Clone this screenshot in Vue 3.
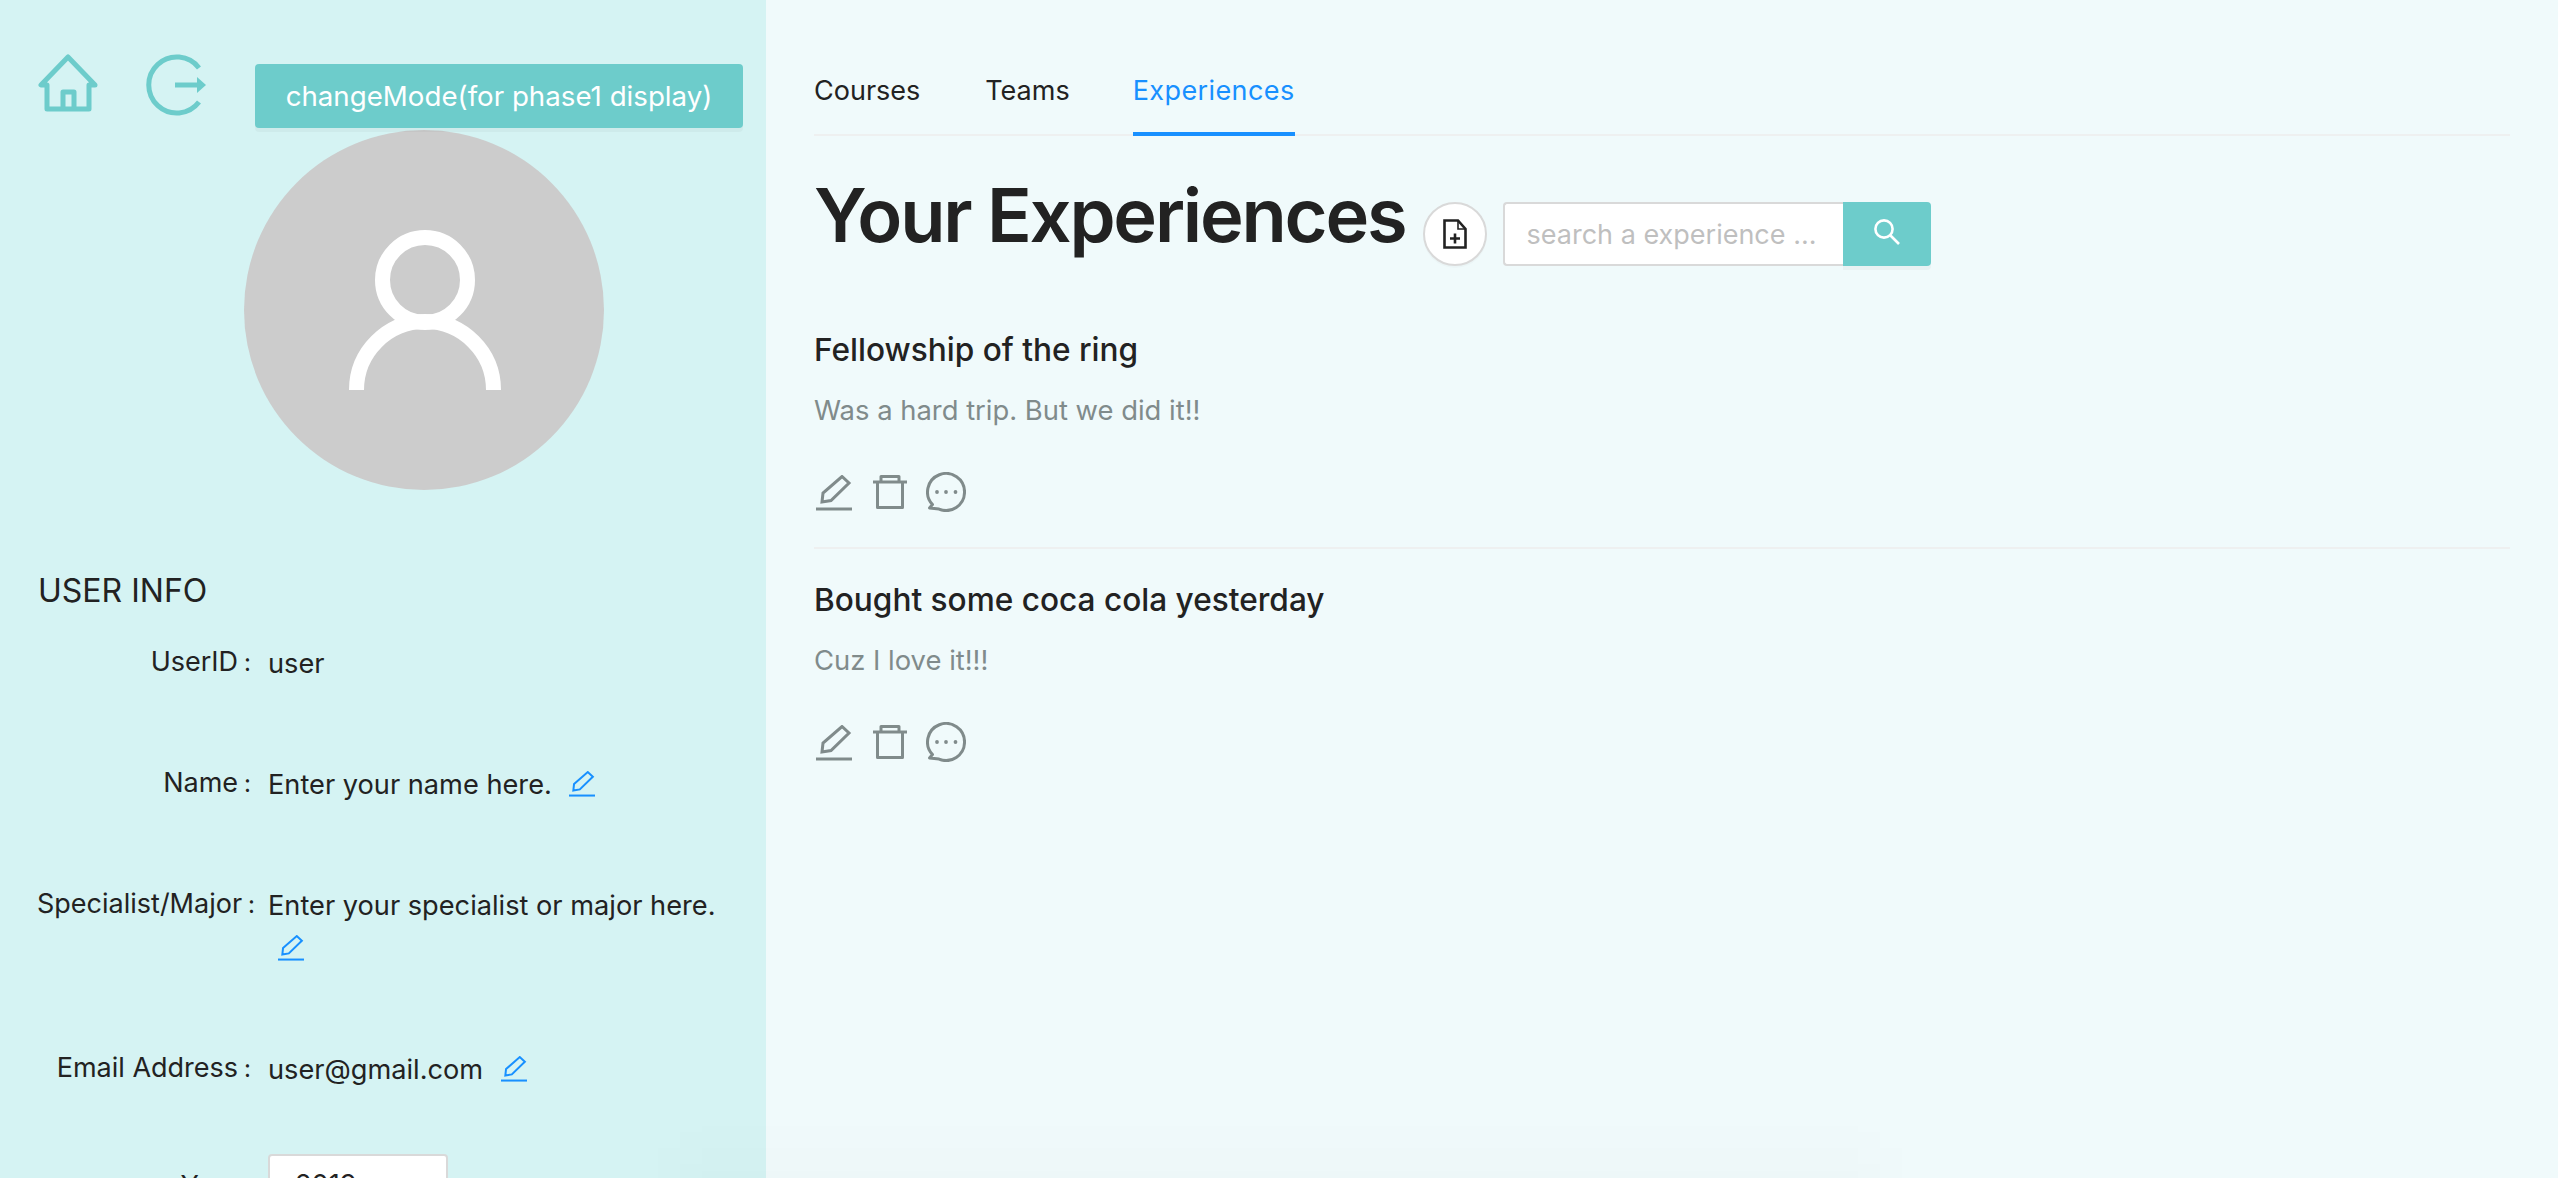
<script setup>
import { ref } from "vue";

const tabs = ["Courses", "Teams", "Experiences"];
const activeTab = ref("Experiences");
const search = ref("");

const experiences = ref([
  { id: 1, title: "Fellowship of the ring", desc: "Was a hard trip. But we did it!!" },
  { id: 2, title: "Bought some coca cola yesterday", desc: "Cuz I love it!!!" },
]);

const pencil = "M6 27 L7 18 L26 1.5 L33 8 L15 25.5 Z";
</script>

<template>
  <div class="page">
    <aside class="sidebar">
      <div class="top-row">
        <svg class="home-icon" viewBox="0 0 62 60" fill="none" stroke="#6dcccb" stroke-width="5" stroke-linejoin="round">
          <path d="M52 31 H58 L31 3 L4 31 H10 V55 H52 Z" />
          <path d="M26 55 V38 H37 V55" />
        </svg>
        <svg class="logout-icon" viewBox="0 0 66 62" fill="none" stroke="#6dcccb" stroke-width="5">
          <path d="M53 14 A28 28 0 1 0 53 48" />
          <path d="M29 31 H52" />
          <path d="M51 23 L60 31 L51 39 Z" fill="#6dcccb" stroke="none" />
        </svg>
        <button class="mode-btn">changeMode(for phase1 display)</button>
      </div>

      <div class="avatar">
        <svg viewBox="0 0 360 360" fill="none" stroke="#fff" stroke-width="15">
          <circle cx="181" cy="150" r="42.5" />
          <path d="M112.5 260 A68.5 68.5 0 0 1 249.5 260" />
        </svg>
      </div>

      <h3 class="info-title">USER INFO</h3>

      <div class="info-row">
        <span class="info-label">UserID</span>
        <div class="info-value">user</div>
      </div>
      <div class="info-row">
        <span class="info-label">Name</span>
        <div class="info-value">
          Enter your name here.
          <svg class="mini-edit" viewBox="0 0 36 36" fill="none" stroke="#1890ff" stroke-width="2.8"><path :d="pencil" /><path d="M0 34 H36" /></svg>
        </div>
      </div>
      <div class="info-row">
        <span class="info-label">Specialist/Major</span>
        <div class="info-value">
          Enter your specialist or major here.
          <svg class="mini-edit" viewBox="0 0 36 36" fill="none" stroke="#1890ff" stroke-width="2.8"><path :d="pencil" /><path d="M0 34 H36" /></svg>
        </div>
      </div>
      <div class="info-row">
        <span class="info-label">Email Address</span>
        <div class="info-value">
          user@gmail.com
          <svg class="mini-edit" viewBox="0 0 36 36" fill="none" stroke="#1890ff" stroke-width="2.8"><path :d="pencil" /><path d="M0 34 H36" /></svg>
        </div>
      </div>
      <div class="info-row year-row">
        <span class="info-label">Year</span>
        <div class="year-box">2019</div>
      </div>
    </aside>

    <main class="content">
      <nav class="tabs">
        <a v-for="tab in tabs" :key="tab" class="tab" :class="{ active: tab === activeTab }" @click="activeTab = tab">{{ tab }}</a>
      </nav>

      <div class="heading-row">
        <h1>Your Experiences</h1>
        <button class="add-btn">
          <svg viewBox="0 0 24 30" fill="none" stroke="#222" stroke-width="2.6">
            <path d="M1.5 1.5 H15 L22.5 10 V28.5 H1.5 Z" />
            <path d="M15 1.5 V10 H22.5" stroke-width="1.6" />
            <path d="M7 19.5 H17 M12 14.5 V24.5" />
          </svg>
        </button>
        <div class="search">
          <input v-model="search" placeholder="search a experience ..." />
          <button class="search-btn">
            <svg viewBox="0 0 28 28" fill="none" stroke="#fff" stroke-width="2.6">
              <circle cx="11" cy="11" r="8.6" />
              <path d="M17.5 17.5 L26 26" />
            </svg>
          </button>
        </div>
      </div>

      <ul class="list">
        <li v-for="item in experiences" :key="item.id" class="item">
          <h4>{{ item.title }}</h4>
          <p>{{ item.desc }}</p>
          <div class="actions">
            <svg class="act-edit" viewBox="0 0 36 36" fill="none" stroke="#808b8b" stroke-width="3"><path :d="pencil" /><path d="M0 34 H36" /></svg>
            <svg class="act-trash" viewBox="0 0 34 34" fill="none" stroke="#808b8b" stroke-width="3" stroke-linejoin="round">
              <path d="M0 7 H34" />
              <path d="M8 7 V1.5 H26 V7" />
              <path d="M4.5 7 V32.5 H29.5 V7" />
            </svg>
            <svg class="act-comment" viewBox="0 0 40 40" fill="none" stroke="#808b8b" stroke-width="3" stroke-linejoin="round">
              <path d="M6.5 32.6 A18.5 18.5 0 1 1 13 37.1 L3.5 36 Z" />
              <circle cx="11" cy="20" r="1.9" fill="#808b8b" stroke="none" />
              <circle cx="20" cy="20" r="1.9" fill="#808b8b" stroke="none" />
              <circle cx="29.5" cy="20" r="1.9" fill="#808b8b" stroke="none" />
            </svg>
          </div>
        </li>
      </ul>
    </main>
  </div>
</template>

<style scoped>
.page {
  position: relative;
  display: flex;
  height: 100vh;
  overflow: hidden;
  background: #f0fafb;
  color: #222;
  font-family: Inter, "Noto Sans", sans-serif;
}
/* faint shadow along the bottom edge */
.page::after {
  content: "";
  position: absolute;
  left: 680px;
  bottom: -50px;
  width: 1200px;
  height: 80px;
  background: rgba(0, 0, 0, 0.012);
  filter: blur(24px);
  pointer-events: none;
}
.sidebar {
  flex: 0 0 766px;
  box-sizing: border-box;
  padding: 54px 0 0 37px;
  background: #d5f3f3;
  overflow: hidden;
}
.top-row {
  display: flex;
  align-items: flex-start;
  height: 76px;
}
.home-icon {
  flex: none;
  width: 62px;
  height: 60px;
}
.logout-icon {
  flex: none;
  width: 66px;
  height: 62px;
  margin-left: 47px;
}
.mode-btn {
  flex: none;
  width: 488px;
  height: 64px;
  margin: 10px 0 0 43px;
  border: none;
  border-radius: 4px;
  background: #6dcccb;
  box-shadow: 0 4px 0 rgba(0, 0, 0, 0.03);
  color: #fff;
  font: 400 27.7px Inter, sans-serif;
}
.avatar {
  width: 360px;
  height: 360px;
  margin-left: 207px;
  border-radius: 50%;
  background: #ccc;
}
.avatar svg {
  display: block;
  width: 100%;
  height: 100%;
}
.info-title {
  margin: 80px 0 28px 1px;
  font-size: 32px;
  font-weight: 400;
  line-height: 42px;
}
.info-row {
  display: flex;
  margin-bottom: 76px;
  font-size: 27.2px;
  line-height: 43px;
}
.info-label {
  flex: 0 0 214px;
  min-width: 0;
  font-size: 27px;
  text-align: right;
  white-space: nowrap;
}
.info-label::after {
  content: ":";
  margin-left: 6px;
  font-size: 24px;
}
.info-value {
  width: 478px;
  margin-left: 17px;
  padding-top: 2px;
}
.mini-edit {
  width: 26px;
  height: 26px;
  margin: 0 0 -3px 10px;
}
.year-box {
  box-sizing: border-box;
  width: 180px;
  height: 62px;
  margin: -10px 0 0 17px;
  padding: 7px 25px;
  border: 2px solid #d9d9d9;
  border-radius: 4px;
  background: #fff;
}
.year-row {
  align-items: flex-start;
  margin-top: -3px;
}
.content {
  flex: 1;
  box-sizing: border-box;
  padding: 69px 48px 0;
}
.tabs {
  display: flex;
  gap: 65px;
  border-bottom: 2px solid #eef0f0;
}
.tab {
  margin-bottom: -2px;
  padding-bottom: 19px;
  border-bottom: 4px solid transparent;
  font-size: 27px;
  line-height: 44px;
  cursor: pointer;
}
.tab.active {
  margin-left: -2px;
  border-bottom-color: #1890ff;
  color: #1890ff;
  letter-spacing: 0.4px;
}
.heading-row {
  display: flex;
  align-items: flex-start;
  margin-top: 34px;
}
h1 {
  margin: 0;
  font-size: 74px;
  font-weight: 600;
  letter-spacing: -2.2px;
  line-height: 90px;
}
.add-btn {
  flex: none;
  width: 64px;
  height: 64px;
  margin: 32px 0 0 17px;
  padding: 0;
  border: 2px solid #d9d9d9;
  border-radius: 50%;
  background: #fff;
  box-shadow: 0 2px 0 rgba(0, 0, 0, 0.02);
}
.add-btn svg {
  display: block;
  width: 24px;
  height: 30px;
  margin: 0 auto;
}
.search {
  display: flex;
  margin: 32px 0 0 16px;
}
.search input {
  box-sizing: border-box;
  width: 340px;
  height: 64px;
  padding: 0 22px;
  border: 2px solid #d9d9d9;
  border-right: none;
  border-radius: 4px 0 0 4px;
  outline: none;
  background: #fff;
  font: 400 27px Inter, sans-serif;
}
.search input::placeholder {
  color: #bfbfbf;
}
.search-btn {
  width: 88px;
  height: 64px;
  padding: 0;
  border: none;
  border-radius: 0 4px 4px 0;
  background: #6dcccb;
  box-shadow: 0 4px 0 rgba(0, 0, 0, 0.03);
}
.search-btn svg {
  display: block;
  width: 28px;
  height: 28px;
  margin: -4px auto 0;
}
.list {
  margin: 33px 0 0;
  padding: 0;
  list-style: none;
}
.item {
  padding: 28px 0 35px;
  border-bottom: 2px solid #eef0f0;
}
.item:last-child {
  border-bottom: none;
}
h4 {
  margin: 0;
  font-size: 31.6px;
  font-weight: 500;
  line-height: 46px;
}
.item p {
  margin: 15px 0 0;
  color: #808b8b;
  font-size: 27.4px;
  line-height: 44px;
}
.actions {
  display: flex;
  align-items: flex-start;
  margin-top: 40px;
  height: 40px;
}
.act-edit {
  width: 36px;
  height: 36px;
  margin: 3px 0 0 2px;
}
.act-trash {
  width: 34px;
  height: 34px;
  margin: 3px 0 0 21px;
}
.act-comment {
  width: 40px;
  height: 40px;
  margin-left: 19px;
}
</style>
